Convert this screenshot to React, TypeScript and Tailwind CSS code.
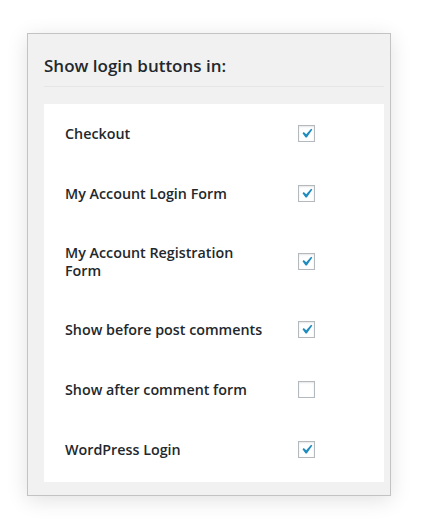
const rows: { label: string; checked: boolean }[] = [
  { label: "Checkout", checked: true },
  { label: "My Account Login Form", checked: true },
  { label: "My Account Registration Form", checked: true },
  { label: "Show before post comments", checked: true },
  { label: "Show after comment form", checked: false },
  { label: "WordPress Login", checked: true },
];

function Checkbox({ checked }: { checked: boolean }) {
  return (
    <span className="flex h-[17px] w-[17px] items-center justify-center overflow-visible border border-[#b4b9be] bg-white shadow-[inset_0_1px_2px_rgba(0,0,0,0.1)]">
      {checked && (
        <svg viewBox="0 0 20 20" className="-m-[2px] h-[19px] w-[19px] shrink-0">
          <path d="M14.83 4.89l1.34.94-5.81 8.38H9.02L5.78 9.67l1.34-1.25 2.57 2.4z" fill="#1e8cbe" />
        </svg>
      )}
    </span>
  );
}

export default function App() {
  return (
    <div className="h-[522px] w-[422px] bg-white pl-[27px] pt-[33px] font-['Open_Sans',sans-serif] text-[#23282d]">
      <div className="w-[364px] border border-[#c3c3c3] bg-[#f1f1f1] pb-[13px] pl-4 pr-[6px] shadow-[0_4px_20px_rgba(0,0,0,0.12)]">
        <h2 className="border-b border-[#e6e6e6] pb-[10px] pt-[21px] text-[17px] font-semibold leading-[21px]">
          Show login buttons in:
        </h2>
        <div className="mt-[17px] bg-white pb-[2px] pl-[21px]">
          {rows.map((row) => (
            <div key={row.label} className="flex min-h-[60px] items-center py-5">
              <div className="w-[200px] text-[14.3px] font-semibold leading-[18px]">{row.label}</div>
              <div className="-mt-[2px] ml-[33px]">
                <Checkbox checked={row.checked} />
              </div>
            </div>
          ))}
        </div>
      </div>
    </div>
  );
}
